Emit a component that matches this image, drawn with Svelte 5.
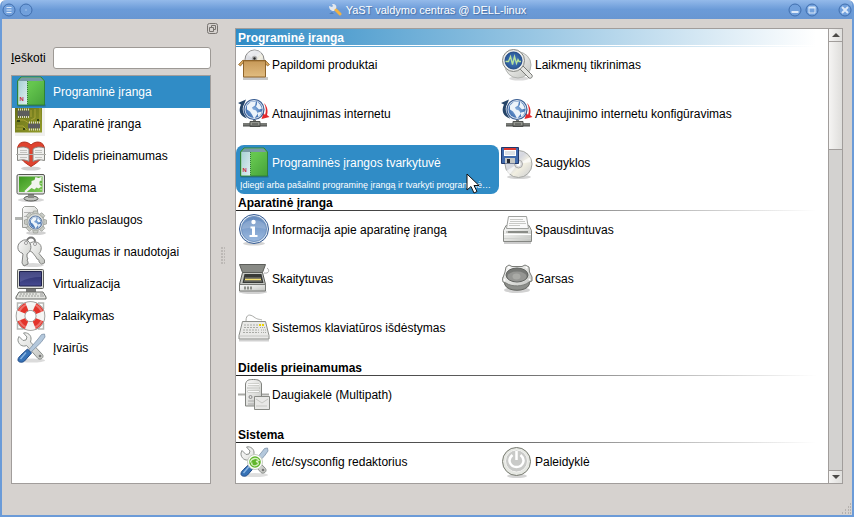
<script>
  const categories = [
    { label: 'Programinė įranga', icon: 'package' },
    { label: 'Aparatinė įranga', icon: 'board' },
    { label: 'Didelis prieinamumas', icon: 'heart' },
    { label: 'Sistema', icon: 'system' },
    { label: 'Tinklo paslaugos', icon: 'network' },
    { label: 'Saugumas ir naudotojai', icon: 'keys' },
    { label: 'Virtualizacija', icon: 'computer' },
    { label: 'Palaikymas', icon: 'support' },
    { label: 'Įvairūs', icon: 'tools' }
  ];

  const groups = [
    {
      title: 'Programinė įranga',
      items: [
        { label: 'Papildomi produktai', icon: 'box' },
        { label: 'Laikmenų tikrinimas', icon: 'check' },
        { label: 'Atnaujinimas internetu', icon: 'update' },
        { label: 'Atnaujinimo internetu konfigūravimas', icon: 'update' },
        {
          label: 'Programinės įrangos tvarkytuvė',
          icon: 'package',
          hint: 'Įdiegti arba pašalinti programinę įrangą ir tvarkyti programinė…'
        },
        { label: 'Saugyklos', icon: 'repos' }
      ]
    },
    {
      title: 'Aparatinė įranga',
      items: [
        { label: 'Informacija apie aparatinę įrangą', icon: 'info' },
        { label: 'Spausdintuvas', icon: 'printer' },
        { label: 'Skaitytuvas', icon: 'scanner' },
        { label: 'Garsas', icon: 'speaker' },
        { label: 'Sistemos klaviatūros išdėstymas', icon: 'keyboard' }
      ]
    },
    {
      title: 'Didelis prieinamumas',
      items: [{ label: 'Daugiakelė (Multipath)', icon: 'server' }]
    },
    {
      title: 'Sistema',
      items: [
        { label: '/etc/sysconfig redaktorius', icon: 'sysconfig' },
        { label: 'Paleidyklė', icon: 'power' }
      ]
    }
  ];

  let current = $state(0);
  let active = $state('Programinės įrangos tvarkytuvė');
  let query = $state('');
  const spokes = [0, 45, 90, 135, 180, 225, 270, 315];
</script>

{#snippet globe(x, y, r)}
  <g transform="translate({x} {y}) scale({r / 10})">
    <circle r="10" fill="#d5e0ee" stroke="#3c5f93" stroke-width="1.2" />
    <circle r="8.500" fill="url(#globe)" />
    <path d="M-7-4l4-4 5 0-1 4-3 2 1 2 3 1 2 3-3 4-1 1-2-4-2-3-3-2zM3-8l3 3 2 4-3 1-3-3 1-2zM4 3l4-1-2 4-2 1z" fill="#edf4fa" />
  </g>
{/snippet}

{#snippet spanner()}
  <path d="M4 4.500l4 4 3-.5 1-3-3.500-4c4-1 8 2 7.500 6.500l-.5 2.500 12 12.500c2 3-2 6-4.500 4L11.500 13.500c-4 2-9-1.500-8.500-6.500z" fill="url(#metal)" stroke="#8d918e" />
  <circle cx="25" cy="24" r="1.300" fill="#777" />
  <path d="M23 7l3.500-4.500 3-.5.5 3L26 10.500 14 22l-2-2z" fill="#b4c8dc" stroke="#7e92a8" stroke-width=".8" />
  <path d="M12.500 17l4 4-7 8c-2 2-6.500 1.500-6.500-1 0-2 1-3 2.500-4.500z" fill="#3672b6" stroke="#204a87" />
  <path d="M11 20.500l-5.500 6.500" stroke="#88b4e2" stroke-width="1.500" />
{/snippet}

{#snippet icon(name)}
  <svg class="icon" viewBox="0 0 32 32" width="32" height="32" fill="none" aria-hidden="true">
    {#if name === 'package'}
      <path d="M2.500 29.500h28" stroke="#000" stroke-opacity=".25" stroke-width="2" />
      <path d="M6 1h20l3.500 4v24h-27V5z" fill="url(#green)" stroke="#2f8238" />
      <path d="M6.500 1.500h19l3 3.500h-25z" fill="#7899a5" />
      <path d="M3.300 5h9v23.500h-9z" fill="url(#sheet)" />
      <path d="M12.500 5v24" stroke="#327e38" stroke-dasharray="1 1" />
      <text x="4.500" y="25" fill="#c5303e" class="mark">N</text>
    {:else if name === 'board'}
      <path d="M0 0h30v28H0z" fill="#f0f0ee" />
      <path d="M0 0h27v24.500H0z" fill="url(#pcb)" />
      <path d="M1 12h8l5 3v8M2 18h6l4 4M20 1v9l-4 2M25 0v12M10 0v2M16 2v7M1 21h8" stroke="#b5ab3c" stroke-width=".8" />
      <path d="M2.500 2.500h12v6h-12zM13 15.500h12v5h-12z" fill="#5d5d5d" />
      <path d="M3 1.500h12M3 9h12M14 14.500h11M14 21.500h11" stroke="#d8d8c8" stroke-width="2" stroke-dasharray="1 1" />
      <path d="M2 12h3v2H2zM22 11h2v2h-2zM8 20h2v2H8z" fill="#34430f" />
    {:else if name === 'heart'}
      <ellipse cx="16" cy="28.500" rx="10" ry="2" fill="#000" opacity=".18" />
      <path d="M16 26.500C9 22.500 2.500 17 2.500 9.500 2.500.500 12 .500 16 5c4-4.500 13.500-4.500 13.500 4.500 0 7.500-6.500 13-13.500 17z" fill="#df432f" stroke="#b53322" />
      <path d="M2.500 8c4-1.500 8-1.500 11.500 1v12.500c-3.500-2-7.500-2-11.500-1zM18 9c3.500-2.500 7.500-2.500 11.500-1v12.500c-4-1-8-1-11.500 1z" fill="#efefed" stroke="#858580" />
      <path d="M5 10.500h7M5 12.500h7M20 10.500h7M20 12.500h7M5 17.500h7M20 17.500h7" stroke="#c3c3bf" />
      <path d="M1 14.500h30" stroke="#b0b0ac" />
    {:else if name === 'system'}
      <ellipse cx="16" cy="28" rx="13" ry="2" fill="#000" opacity=".16" />
      <ellipse cx="16" cy="26.500" rx="7" ry="2.500" fill="#c2c4c0" stroke="#555753" />
      <path d="M13 21h6v5h-6z" fill="#888a85" />
      <rect x="2" y="2.500" width="27.500" height="19.500" rx="1.500" fill="#e3e4e1" stroke="#555753" />
      <path d="M4 4.500h23.500V20H4z" fill="url(#screen)" />
      <path d="M9.500 19l7-7v-3l3-1 1-3 3 1 3-1v3l-2 1.500v3l2 2-3 2-2-1-2 2-3-1.500-6 5z" fill="#f2f5ef" />
      <path d="M26 5v15" stroke="#dcebd4" stroke-dasharray="1 2" />
    {:else if name === 'network'}
      <path d="M0 14.500h10" stroke="#b3b5b2" stroke-width="3" />
      <path d="M7.500 4.500l2-2h10l3 3v18h-15z" fill="url(#metal)" stroke="#9a9c98" />
      <path d="M9 8.500h11M9 12.500h8M9 16.500h5" stroke="#b5b5b5" />
      <ellipse cx="21" cy="29" rx="10" ry="2" fill="#000" opacity=".18" />
      {#each spokes as angle}
        <path d="M18.500 7h4l1 4h-6z" fill="#c9ccc6" stroke="#979a94" stroke-width=".7" transform="rotate({angle} 20.500 18)" />
      {/each}
      <circle cx="20.500" cy="18" r="8.500" fill="#d8dad6" stroke="#a9aca6" />
      {@render globe(20.5, 18.5, 6.5)}
    {:else if name === 'keys'}
      <ellipse cx="18" cy="29" rx="11" ry="2" fill="#000" opacity=".15" />
      <circle cx="16" cy="5.500" r="4" stroke="#777" stroke-width="2" />
      <path d="M14 8c5-5 14-1 12 6-1 3-2 3.500-2 3.500l5.500 6.500v3l-3 1-2.500-2v-2l-2-1-1-2-4-5c-4-1-5-5-3-8z" fill="url(#metal)" stroke="#8a8b88" />
      <path d="M7 5c-6 3-5 11 0 12l1 1-1 9 2 3 4-2v-2l-1-2 1-1-1-2v-3c5-3 5-10 1-13-2-1.500-4-1.500-6 0z" fill="url(#metal)" stroke="#818280" />
      <circle cx="11" cy="7" r="1.500" fill="#fff" stroke="#999" /><circle cx="20" cy="8" r="1.500" fill="#fff" stroke="#999" />
    {:else if name === 'computer'}
      <rect x="2.500" y="1.500" width="26" height="19" rx="1" fill="#ddded9" stroke="#5f615d" />
      <path d="M4.500 3.500h22v14.500h-22z" fill="url(#navy)" stroke="#20234f" />
      <path d="M5 4h21v5Q14 9 5 14z" fill="#8b8fc2" opacity=".3" />
      <path d="M11 21h10v3H11z" fill="#777" />
      <path d="M4 24h24l3 5v2H1v-2z" fill="#e2e3df" stroke="#686a66" />
      <path d="M5 26h18M4 28h20" stroke="#9a9c98" stroke-dasharray="2 1" /><path d="M25 26h3M25 28h4" stroke="#999" />
    {:else if name === 'support'}
      <path d="M2.500 9V3h6M23 3h5.500v6M28.500 23v6H23M8.500 29h-6v-6" stroke="#b5b6b3" stroke-width="1.500" />
      <circle cx="15.500" cy="16" r="10" stroke="#8f8f8d" stroke-width="9.600" />
      <circle cx="15.500" cy="16" r="10" stroke="#f3f3f1" stroke-width="8" />
      <circle cx="15.500" cy="16" r="10" stroke="#e3342b" stroke-width="8" stroke-dasharray="7.854 7.854" transform="rotate(22.500 15.500 16)" />
      <circle cx="15.500" cy="16" r="12" stroke="#fff" stroke-opacity=".3" stroke-width="2" />
    {:else if name === 'tools'}
      <ellipse cx="17" cy="28.500" rx="13" ry="2" fill="#000" opacity=".14" />
      {@render spanner()}
    {:else if name === 'box'}
      <path d="M5 29.500h25" stroke="#000" stroke-opacity=".22" stroke-width="3" />
      <circle cx="16.500" cy="10.500" r="9.500" fill="url(#disc)" stroke="#888" />
      <path d="M9 5l7 6 7-6v-2q-6-4-12 0z" fill="#fff" opacity=".4" />
      <circle cx="16.500" cy="9.500" r="2" fill="#222" stroke="#b2b2b2" stroke-width="1.500" />
      <path d="M5 11L.500 15.500l2 1.500 4-5zM27 11l4.500 4.500-2 1.500-4-5z" fill="#d6a75e" stroke="#94682d" stroke-width=".8" />
      <path d="M5.500 11.500h22v16.500h-22z" fill="url(#carton)" stroke="#90652b" />
      <path d="M6 12.500h21" stroke="#b78a4b" />
    {:else if name === 'check'}
      <ellipse cx="18" cy="29.500" rx="10" ry="2" fill="#000" opacity=".15" />
      <circle cx="17" cy="16" r="13" fill="url(#metal)" stroke="#b1b3b0" />
      <path d="M19 20l3-3 9 9c1 2-1 4-3 3z" fill="#e3e4e1" stroke="#777975" />
      <circle cx="12.500" cy="11.500" r="11" fill="#eaebe9" stroke="#858783" />
      <circle cx="12.500" cy="11.500" r="8.500" fill="url(#blue)" stroke="#204a87" />
      <path d="M4.500 12.500h3l2-5 2 8 2-8 2 7 1.500-4 1 2h2" stroke="#b9e39a" stroke-width="1.300" />
    {:else if name === 'update'}
      <path d="M0 5L8 1.500l-2 5c-3 5 0 10 3 14-7-2-9-8-6-14z" fill="#254468" />
      <path d="M26 5c4 4 4 9 3 12l2.500 2-8 2 2-6 1.500 2c1.500-4 1-8-1-12z" fill="#e3272b" />
      {@render globe(16, 11.5, 10)}
      <path d="M16.500 22v5M5 26.500h24" stroke="#777975" stroke-width="3" />
      <path d="M12 23.500h10v5H12z" fill="#94968f" stroke="#50524f" />
      <path d="M5 28h24M14 26h6" stroke="#474947" />
    {:else if name === 'repos'}
      <ellipse cx="18" cy="30" rx="12" ry="2" fill="#000" opacity=".17" />
      <circle cx="17.500" cy="17" r="13.500" fill="url(#disc)" stroke="#a5a7a3" />
      <path d="M17 17l12-7 1 5zM17 17L8 28l-3-4z" fill="#fff" opacity=".65" />
      <circle cx="17.500" cy="17" r="4" fill="#ddd" stroke="#aaa" /><circle cx="17.500" cy="17" r="2" fill="#fff" />
      <path d="M.500.500h17v16h-17z" fill="#416aac" stroke="#20376b" />
      <path d="M3 1h12v8H3z" fill="#fff" /><path d="M3 1h12v2H3z" fill="#dc3830" /><path d="M4 5h10M4 7h10" stroke="#bcc4ce" />
      <path d="M4 11h10v5.500H4z" fill="#c6c8c6" /><path d="M6 12h3v4H6z" fill="#272b36" />
    {:else if name === 'info'}
      <ellipse cx="16" cy="29.500" rx="11" ry="2" fill="#000" opacity=".17" />
      <circle cx="16" cy="15" r="14.500" fill="#d9e5f2" stroke="#355a91" />
      <circle cx="16" cy="15" r="12.500" fill="url(#infoblue)" stroke="#7193bf" />
      <path d="M4 15C4 3 28 3 28 15q-12-3-24 0z" fill="#fff" opacity=".16" />
      <circle cx="15.500" cy="8" r="2.200" fill="#fff" />
      <path d="M12.500 12.500h4.500v8.500h2.500v2h-8v-2H14v-6.500h-1.500z" fill="#fff" />
    {:else if name === 'printer'}
      <path d="M3 28.500h27" stroke="#000" stroke-opacity=".2" stroke-width="3" />
      <path d="M5 11.500h23l2.500 5v11h-28v-11z" fill="url(#metal)" stroke="#858783" />
      <path d="M7.500 2.500h18l2 12h-22z" fill="#fafafa" stroke="#a0a29f" />
      <path d="M9 5.500h13M9 7.500h15M8 9.500h17M8 11.500h11" stroke="#c8c9c6" />
      <path d="M5 18h22" stroke="#8a8c87" stroke-width="2" /><path d="M3 20.500h27" stroke="#fff" /><path d="M3 24.500h27" stroke="#d0d1ce" /><path d="M5 18h2" stroke="#fff" />
    {:else if name === 'scanner'}
      <ellipse cx="15" cy="29" rx="14" ry="2" fill="#000" opacity=".18" />
      <path d="M26 10c5 1 6-3 3-5" stroke="#aaa" />
      <path d="M1.500 1.500h26l-3 8h-20z" fill="#888a85" stroke="#5b5d59" />
      <path d="M4.500 9.500h20l3 12h-26z" fill="#c4c6c2" stroke="#5b5d59" />
      <path d="M6.500 11h17l2 9h-21z" fill="#383a37" /><path d="M7 15h16M6 18h18" stroke="#868781" /><path d="M7 16.500h16" stroke="#f4df70" stroke-width="1.500" />
      <path d="M1.500 21.500h26v6.500h-26z" fill="url(#metal)" stroke="#777975" />
      <path d="M6 25h9" stroke="#8d8f8a" stroke-width="3" stroke-dasharray="2 1" />
    {:else if name === 'speaker'}
      <ellipse cx="16" cy="27" rx="13" ry="3" fill="#000" opacity=".18" />
      <path d="M2 14h28l-2 8c-3 7-21 7-24 0z" fill="#8d8f8b" stroke="#62645f" />
      <path d="M1.500 16l2.500-7 1-5 3-2 3 1.500h10l3-1.500 4 2 .500 5 2.500 5v4l-3 1c-5 5-18 5-23 1l-3-1z" fill="url(#metal)" stroke="#7b7d79" />
      <ellipse cx="16" cy="12" rx="11" ry="7" fill="#777976" stroke="#60625f" />
      <ellipse cx="16" cy="13.500" rx="9.500" ry="5" fill="#959693" /><ellipse cx="15.500" cy="13.500" rx="4" ry="3" fill="#a9aaa6" />
      <circle cx="8" cy="4.500" r="1" fill="#fff" /><circle cx="25.500" cy="4.500" r="1" fill="#fff" /><circle cx="3.500" cy="17" r="1" fill="#fff" /><circle cx="28.500" cy="16.500" r="1" fill="#fff" />
    {:else if name === 'keyboard'}
      <path d="M8 9c0-7 4-7 8-4s6 2 8 3" stroke="#a9aaa7" />
      <path d="M1 28.500h30" stroke="#000" stroke-opacity=".18" stroke-width="2" />
      <path d="M4.500 9.500h23l3.500 14v3.500H1v-3.500z" fill="#e9e9e7" stroke="#8b8d89" />
      <path d="M6 13h14M6 15.500h14M5 18h16M5 20.500h16" stroke="#a9aba6" stroke-dasharray="2 1" />
      <path d="M22 15.500h6M23 18h5M23 20.500h6" stroke="#a6a8a2" stroke-dasharray="1 1" /><path d="M21 13h5" stroke="#edd400" stroke-width="2" stroke-dasharray="2 1" /><path d="M2 24h28" stroke="#c5c6c3" />
    {:else if name === 'server'}
      <path d="M0 15.500h31" stroke="#aaaba7" stroke-width="2" />
      <path d="M7.500 5c1-4 3-4.500 8-4.500s7 1 8 4.500v22h-16z" fill="url(#metal)" stroke="#81837f" />
      <path d="M10 5.500h11M9.500 9h12M9.500 12.500h12" stroke="#b5b7b2" stroke-width="2" /><path d="M10 5.500h11M10 9h11M10 12.500h11" stroke="#fafafa" />
      <circle cx="12.500" cy="18" r="1.500" stroke="#888" /><path d="M10 22h6M10 25h6" stroke="#aaa" />
      <path d="M16.500 17.500h15v13h-15z" fill="#e8e8e6" stroke="#888a85" /><path d="M18 20l6 4 6-4M18 27h11" stroke="#c6c7c3" />
    {:else if name === 'sysconfig'}
      <ellipse cx="17" cy="29" rx="13" ry="2" fill="#000" opacity=".13" />
      {@render spanner()}
      <circle cx="17" cy="16" r="7.500" fill="#fff" stroke="#c6ccc1" /><circle cx="17" cy="16" r="5.800" fill="#60b52c" />
      <path d="M12 16.500c2-5 7-5 9-2l-3 1c2 0 4 3 0 4-3 1-5-1-4-3" stroke="#d4f0bf" stroke-width="1.300" />
    {:else if name === 'power'}
      <ellipse cx="16" cy="30" rx="10" ry="2" fill="#000" opacity=".17" />
      <circle cx="15.500" cy="15.500" r="14" fill="#e5e7e2" stroke="#777a70" />
      <circle cx="15.500" cy="15" r="11" fill="#c9cac8" stroke="#f3f3f1" />
      <path d="M11.500 9c-6 5-2 12 4 12s10-7 4-12" stroke="#fff" stroke-width="2.500" /><path d="M15.500 5v9" stroke="#fff" stroke-width="2.500" />
    {/if}
  </svg>
{/snippet}

<svg class="defs" width="0" height="0" aria-hidden="true">
  <defs>
    <linearGradient id="metal" x2="1" y2="1"><stop stop-color="#fafafa" /><stop offset=".55" stop-color="#dfe0dd" /><stop offset="1" stop-color="#c0c2be" /></linearGradient>
    <linearGradient id="green" x2="1" y2="1"><stop offset=".4" stop-color="#65c64e" /><stop offset="1" stop-color="#45a13a" /></linearGradient>
    <linearGradient id="sheet" x2="1" y2="1"><stop stop-color="#a7d0d5" /><stop offset="1" stop-color="#e0eff1" /></linearGradient>
    <linearGradient id="pcb" x2="1" y2="1"><stop stop-color="#686f18" /><stop offset="1" stop-color="#929b29" /></linearGradient>
    <linearGradient id="screen" x2="1" y2="1"><stop stop-color="#3a971e" /><stop offset="1" stop-color="#7fcb57" /></linearGradient>
    <linearGradient id="navy" x2="0" y2="1"><stop stop-color="#272c67" /><stop offset="1" stop-color="#474b91" /></linearGradient>
    <linearGradient id="carton" x2="0" y2="1"><stop stop-color="#c69858" /><stop offset="1" stop-color="#e2bd80" /></linearGradient>
    <linearGradient id="disc" x2="1" y2="1"><stop stop-color="#eee" /><stop offset=".4" stop-color="#d5d7df" /><stop offset=".6" stop-color="#f2efe1" /><stop offset="1" stop-color="#c9cbcf" /></linearGradient>
    <linearGradient id="infoblue" x2="0" y2="1"><stop stop-color="#6389bd" /><stop offset="1" stop-color="#9bb9df" /></linearGradient>
    <radialGradient id="blue"><stop stop-color="#4d84c8" /><stop offset="1" stop-color="#295694" /></radialGradient>
    <radialGradient id="globe"><stop stop-color="#86aedd" /><stop offset="1" stop-color="#4473b3" /></radialGradient>
  </defs>
</svg>

<div class="window">
  <header class="titlebar">
    <div class="controls">
      <button aria-label="Meniu"><svg viewBox="0 0 14 14"><circle cx="7" cy="7" r="6" /><path d="M4.500 4.500h5M4.500 7h5M4.500 9.500h5" /></svg></button>
      <button aria-label="Visuose darbalaukiuose"><svg viewBox="0 0 14 14"><circle cx="7" cy="7" r="6" /><path d="M6.500 7h1" /></svg></button>
    </div>
    <h1>
      <svg viewBox="0 0 14 14" width="14" height="14" aria-hidden="true"><path d="M1 3l3 1 1-1-1-2c4 0 5 2 4 5L6 8C3 8 1 6 1 3z" fill="#e3e8ee" /><path d="M8 7l4 4" stroke="#f3b343" stroke-width="3" stroke-linecap="round" /><path d="M1 11l3-2 2 2z" fill="#31649f" opacity=".5" /></svg>
      YaST valdymo centras @ DELL-linux
    </h1>
    <div class="controls end">
      <button aria-label="Sumažinti"><svg viewBox="0 0 14 14"><circle cx="7" cy="7" r="6" /><path class="bold" d="M3.500 9h7" /></svg></button>
      <button aria-label="Išdidinti"><svg viewBox="0 0 14 14"><circle cx="7" cy="7" r="6" /><path d="M4 4.500h6v5.500H4z" /><path class="bold" d="M3.500 4.500h7" /></svg></button>
      <button class="close" aria-label="Užverti"><svg viewBox="0 0 14 14"><circle cx="7" cy="7" r="6" /><path class="bold" d="M4 4l6 6M10 4l-6 6" /></svg></button>
    </div>
  </header>

  <main>
    <aside>
      <button class="undock" aria-label="Atskirti skydelį">
        <svg viewBox="0 0 12 12" width="12" height="12"><rect x=".500" y=".500" width="10" height="10" rx="2" /><path d="M4.500 5V2.500h4v4H7M2.500 4.500h4v4h-4z" /></svg>
      </button>
      <div class="search">
        <label for="query"><u>I</u>eškoti</label>
        <input id="query" type="text" bind:value={query} />
      </div>
      <nav>
        {#each categories as category, i}
          <button class:selected={i === current} onclick={() => (current = i)}>
            {@render icon(category.icon)}
            <span>{category.label}</span>
          </button>
        {/each}
      </nav>
    </aside>

    <div class="splitter"></div>

    <div class="pane">
      <div class="content">
        {#each groups as group, i}
          <section>
            <h2 class:current={i === current}>{group.title}</h2>
            <div class="modules">
              {#each group.items as item}
                <button class:selected={item.label === active} onclick={() => (active = item.label)}>
                  {@render icon(item.icon)}
                  <span>{item.label}</span>
                  {#if item.hint && item.label === active}
                    <small>{item.hint}</small>
                    <svg class="pointer" viewBox="0 0 14 21" width="14" height="21" aria-hidden="true"><path d="M1 1v16l4-3.500 3 6.500 3-1.500-3-6h5z" fill="#fff" stroke="#111" /></svg>
                  {/if}
                </button>
              {/each}
            </div>
          </section>
        {/each}
      </div>
      <div class="scrollbar">
        <button aria-label="Aukštyn"><svg viewBox="0 0 8 4" width="8" height="4"><path d="M0 4l4-4 4 4z" /></svg></button>
        <div class="track"><div class="thumb"></div></div>
        <button class="down" aria-label="Žemyn"><svg viewBox="0 0 8 4" width="8" height="4"><path d="M0 0h8l-4 4z" /></svg></button>
      </div>
    </div>
  </main>
  <footer>
    <svg viewBox="0 0 12 12" width="12" height="12" aria-hidden="true"><path d="M10 1h1M8 4h1M10 4h1M5 7h1M8 7h1M10 7h1M2 10h1M5 10h1M8 10h1M10 10h1" stroke="#aaa7a4" stroke-width="1.500" /></svg>
  </footer>
</div>

<style>
  :global(body) {
    margin: 0;
    background: #fff;
    font: 12px/16px 'Liberation Sans', Arial, sans-serif;
    color: #000;
  }
  button {
    margin: 0;
    padding: 0;
    border: 0;
    background: none;
    font: inherit;
    color: inherit;
    text-align: left;
  }
  svg {
    display: block;
    flex: none;
  }
  .defs {
    position: absolute;
  }
  .mark {
    font: bold 6px 'Liberation Sans', sans-serif;
  }
  .window {
    box-sizing: border-box;
    height: 100vh;
    display: flex;
    flex-direction: column;
    border: solid #6b9bd8;
    border-width: 0 2px 2px;
    border-radius: 6px 6px 0 0;
    background: #d6d2cf;
    overflow: hidden;
  }
  .titlebar {
    flex: none;
    height: 19px;
    margin: 0 -2px;
    padding: 0 2px;
    display: grid;
    grid-template-columns: 1fr auto 1fr;
    align-items: center;
    background: linear-gradient(#94baea, #6b9bd8 50%, #6896d2);
  }
  h1 {
    margin: 0;
    display: flex;
    align-items: center;
    gap: 4px;
    font-size: 11px;
    font-weight: normal;
    color: #fff;
    text-shadow: 1px 1px 1px #4a70a4;
  }
  .controls {
    display: flex;
    gap: 3px;
  }
  .controls.end {
    justify-content: flex-end;
  }
  .controls svg {
    width: 14px;
    height: 14px;
    fill: none;
    stroke: #dce9f9;
  }
  .controls circle {
    fill: #71a0dc;
    stroke: #416fae;
  }
  .controls .bold {
    stroke-width: 2;
  }
  .close {
    margin-left: 16px;
  }
  main {
    flex: 1;
    min-height: 0;
    display: flex;
    padding: 9px 9px 0;
  }
  aside {
    flex: none;
    width: 208px;
    display: flex;
    flex-direction: column;
    margin-top: -5px;
  }
  .undock {
    align-self: flex-end;
  }
  .undock svg {
    fill: none;
    stroke: #77736f;
  }
  .search {
    display: flex;
    align-items: center;
    gap: 6px;
    margin: 12px 8px 6px 0;
  }
  .search label {
    flex: none;
    width: 36px;
  }
  .search input {
    flex: 1;
    min-width: 0;
    height: 22px;
    box-sizing: border-box;
    border: 1px solid #9d9995;
    border-radius: 3px;
    background: #fff;
    font: inherit;
  }
  nav {
    flex: 1;
    min-height: 0;
    margin-right: 8px;
    border: 1px solid #a19d9b;
    background: #fff;
    overflow: hidden;
  }
  nav button {
    display: flex;
    align-items: center;
    gap: 6px;
    width: 100%;
    height: 32px;
    padding-left: 3px;
  }
  .selected {
    background: #308cc6;
    color: #fff;
  }
  .splitter {
    flex: none;
    width: 4px;
    height: 18px;
    align-self: center;
    margin: 0 10px 0 2px;
    background: radial-gradient(circle at 1px 1px, #bcb8b5 1px, transparent 1px) 0 0 / 3px 3px;
  }
  .pane {
    flex: 1;
    min-width: 0;
    display: flex;
    border: 1px solid #a19d9b;
    background: #fff;
  }
  .content {
    flex: 1;
    min-width: 0;
    overflow: hidden;
  }
  h2 {
    box-sizing: border-box;
    height: 18px;
    margin: 0;
    padding-left: 2px;
    font-size: 12px;
    line-height: 18px;
    background: linear-gradient(90deg, #222, #666 45%, #fff 98%) 0 16px / 100% 1px no-repeat;
  }
  h2.current {
    color: #fff;
    background:
      linear-gradient(#fff, #fff) 0 16px / 100% 1px no-repeat,
      linear-gradient(90deg, #308cc6, #98c6e3 50%, #fff 98%);
  }
  .modules {
    display: grid;
    grid-template-columns: repeat(auto-fill, 263px);
    grid-auto-rows: 49px;
  }
  .modules button {
    position: relative;
    display: grid;
    grid-template-columns: 32px 1fr;
    grid-template-rows: 32px 13px;
    column-gap: 2px;
    align-items: center;
    padding: 2px 0 2px 2px;
    border-radius: 8px;
  }
  span {
    white-space: nowrap;
  }
  small {
    grid-column: 1 / -1;
    padding-left: 2px;
    font-size: 9px;
    line-height: 13px;
    white-space: nowrap;
    overflow: hidden;
  }
  .pointer {
    position: absolute;
    left: 230px;
    top: 28px;
  }
  .scrollbar {
    flex: none;
    width: 13px;
    display: flex;
    flex-direction: column;
    border-left: 1px solid #a19d9b;
    background: #d3d2d0;
  }
  .scrollbar button {
    height: 13px;
    display: grid;
    place-items: center;
    background: linear-gradient(90deg, #f5f4f3, #dfdedc);
    border-bottom: 1px solid #a19d9b;
  }
  .scrollbar .down {
    border-top: 1px solid #a19d9b;
    border-bottom: 0;
  }
  .scrollbar path {
    fill: #4c4a48;
  }
  .track {
    flex: 1;
  }
  .thumb {
    height: 25%;
    border-bottom: 1px solid #a19d9b;
    background: linear-gradient(90deg, #f5f4f3, #dfdedc);
  }
  footer {
    flex: none;
    height: 31px;
    display: flex;
    justify-content: flex-end;
    align-items: flex-end;
  }
</style>
